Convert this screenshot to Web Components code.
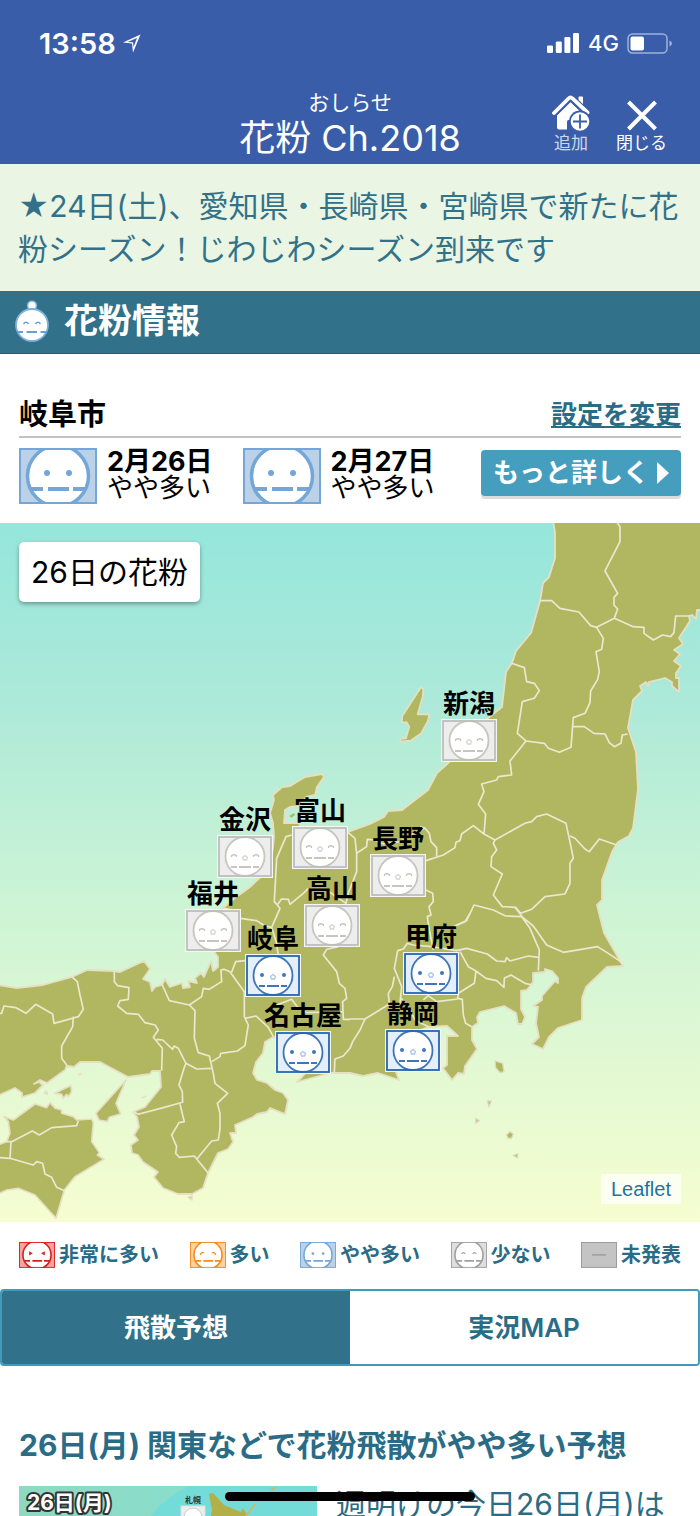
<!DOCTYPE html>
<html lang="ja">
<head>
<meta charset="utf-8">
<meta name="viewport" content="width=device-width, initial-scale=1">
<title>花粉 Ch.2018</title>
<style>
    html, body{
        margin : 0;
        padding : 0;
    }

    body{
        font-family: Inter, "Noto Sans CJK JP", sans-serif;
        color: #000;
        background-color: #fff;
        --azul: #3a5daa;
        --verde: #32718a;
        --borda: #3f9abb;
    }
</style>
</head>
<body>

<app-screen>
    <status-bar hora="13:58" rede="4G"></status-bar>
    <app-header sub="おしらせ" titulo="花粉 Ch.2018"></app-header>
    <news-ticker>★24日(土)、愛知県・長崎県・宮崎県で新たに花<br>粉シーズン！じわじわシーズン到来です</news-ticker>
    <section-title>花粉情報</section-title>
    <city-forecast cidade="岐阜市">
        <day-forecast dia="2月26日" nivel="yaya">やや多い</day-forecast>
        <day-forecast dia="2月27日" nivel="yaya">やや多い</day-forecast>
    </city-forecast>
    <pollen-map titulo="26日の花粉">
        <map-marker x="469" y="217" nivel="few">新潟</map-marker>
        <map-marker x="320" y="324" nivel="few">富山</map-marker>
        <map-marker x="245" y="333" nivel="few">金沢</map-marker>
        <map-marker x="398" y="352" nivel="few">長野</map-marker>
        <map-marker x="332" y="402" nivel="few">高山</map-marker>
        <map-marker x="213" y="407" nivel="few">福井</map-marker>
        <map-marker x="273" y="452" nivel="yaya">岐阜</map-marker>
        <map-marker x="431" y="450" nivel="yaya">甲府</map-marker>
        <map-marker x="303" y="529" nivel="yaya">名古屋</map-marker>
        <map-marker x="413" y="527" nivel="yaya">静岡</map-marker>
    </pollen-map>
    <pollen-legend></pollen-legend>
    <map-tabs></map-tabs>
    <news-article titulo="26日(月) 関東などで花粉飛散がやや多い予想">週明けの今日26日(月)は</news-article>
</app-screen>

<script>
'use strict'

// Cria a sombra e coloca nela os estilos e o conteúdo
function montar(el, css, html){
    const shadow = el.attachShadow({mode:'open'})
    const template = document.createElement('template')
    template.innerHTML = `<style>:host, *{box-sizing: border-box;} *{margin: 0; padding: 0;} ${css}</style>${html}`
    shadow.appendChild(template.content.cloneNode(true))
}

// Tela do aplicativo, com a barra preta do gesto de início por cima
class AppScreen extends HTMLElement{
    connectedCallback(){
        montar(this, `
        :host{
            display: block;
            position: relative;
            height: 100vh;
            overflow: hidden;
            background-color: #fff;
        }

        .home{
            position: absolute;
            left: 50%;
            bottom: 15px;
            width: 250px;
            height: 9px;
            margin-left: -125px;
            border-radius: 5px;
            background-color: #000;
        }
        `, `<slot></slot><div class="home"></div>`)
    }
}
customElements.define('app-screen', AppScreen)

class StatusBar extends HTMLElement{
    connectedCallback(){
        montar(this, `
        :host{
            display: flex;
            align-items: center;
            justify-content: space-between;
            height: 86px;
            padding: 0 27px 0 39px;
            color: #fff;
            background-color: var(--azul);
        }

        div{
            display: flex;
            align-items: center;
            gap: 8px;
        }

        .hora{
            gap: 6px;
            font-size: 29px;
            font-weight: 600;
        }

        .rede{
            font-size: 22px;
            font-weight: 500;
        }

        svg{
            display: block;
        }
        `, `
        <div class="hora">
            <span>${this.getAttribute('hora')}</span>
            <svg width="20" height="20" viewBox="0 0 20 20"><path d="M18.500 1.500L1 9.500L10 10.500L11 19.500ZM15 5L5.500 9L11 9.300L11.600 14Z" fill="#fff" fill-rule="evenodd"/></svg>
        </div>
        <div class="rede">
            <svg width="33" height="20" viewBox="0 0 33 20" fill="#fff">
                <rect x="0" y="12.500" width="6" height="7.500" rx="1.300"/>
                <rect x="8.800" y="8.500" width="6" height="11.500" rx="1.300"/>
                <rect x="17.400" y="4" width="6" height="16" rx="1.300"/>
                <rect x="26" y="0" width="6" height="20" rx="1.300"/>
            </svg>
            <span>${this.getAttribute('rede')}</span>
            <svg width="46" height="21" viewBox="0 0 46 21">
                <rect x="1" y="1" width="39" height="19" rx="4.500" fill="none" stroke="#9fb1d8" stroke-width="1.500"/>
                <rect x="3.500" y="3.500" width="13.500" height="14" rx="2" fill="#fff"/>
                <path d="M42.500 7.500Q45 8.500 45 10.500T42.500 13.500Z" fill="#9fb1d8"/>
            </svg>
        </div>`)
    }
}
customElements.define('status-bar', StatusBar)

class AppHeader extends HTMLElement{
    connectedCallback(){
        montar(this, `
        :host{
            display: grid;
            grid-template-columns: 1fr auto 1fr;
            padding: 2px 33px 6px;
            color: #fff;
            background-color: var(--azul);
        }

        .titulo{
            grid-column: 2;
            text-align: center;
        }

        p{
            font-size: 21px;
            line-height: 30px;
        }

        h1{
            font-size: 36px;
            font-weight: 400;
            line-height: 40px;
        }

        .acoes{
            display: flex;
            justify-content: flex-end;
            align-items: flex-end;
            gap: 26px;
            padding-bottom: 3px;
        }

        button{
            display: flex;
            flex-direction: column;
            align-items: center;
            border: 0;
            background: none;
            color: #fff;
            font-family: inherit;
            font-size: 17px;
            line-height: 24px;
        }

        .add span{
            opacity: .75;
        }
        `, `
        <div class="titulo">
            <p>${this.getAttribute('sub')}</p>
            <h1>${this.getAttribute('titulo')}</h1>
        </div>
        <div class="acoes">
            <button class="add" type="button">
                <svg width="38" height="36" viewBox="0 0 38 36">
                    <path d="M5 20L18.500 7L32 20V34.500H7Q5 34.500 5 32.500Z" fill="#fff"/>
                    <path d="M15 35V26.500Q15 25 16.500 25H22V35Z" fill="#3a5daa"/>
                    <path d="M27.500 2.500H30V11L27.500 9Z" fill="#fff" stroke="#fff" stroke-width="2" stroke-linejoin="round"/>
                    <path d="M2 18.500L16.500 4Q18.500 2 20.500 4L35.500 18" fill="none" stroke="#3a5daa" stroke-width="7"/>
                    <path d="M2 18L16.500 3.500Q18.500 1.500 20.500 3.500L35.500 17.500" fill="none" stroke="#fff" stroke-width="3.800" stroke-linecap="round"/>
                    <circle cx="28" cy="26.500" r="11" fill="#3a5daa"/>
                    <circle cx="28" cy="26.500" r="9.300" fill="#fff"/>
                    <path d="M28 19.500V33.500M21 26.500H35" stroke="#3a5daa" stroke-width="1.800"/>
                </svg>
                <span>追加</span>
            </button>
            <button type="button">
                <svg width="36" height="36" viewBox="0 0 36 36"><path d="M4.500 7L31.500 34M31.500 7L4.500 34" stroke="#fff" stroke-width="4"/></svg>
                <span>閉じる</span>
            </button>
        </div>`)
    }
}
customElements.define('app-header', AppHeader)

class NewsTicker extends HTMLElement{
    connectedCallback(){
        montar(this, `
        :host{
            display: block;
            padding: 21px 0 20px 18px;
            font-size: 30px;
            line-height: 43px;
            color: var(--verde);
            background-color: #eaf5e4;
        }
        `, `<p><slot></slot></p>`)
    }
}
customElements.define('news-ticker', NewsTicker)

class SectionTitle extends HTMLElement{
    connectedCallback(){
        montar(this, `
        :host{
            display: flex;
            align-items: center;
            gap: 14px;
            height: 63px;
            padding: 0 14px 2px;
            color: #fff;
            background-color: var(--verde);
            border-bottom: 1px solid #1f5f7a;
        }

        h2{
            font-size: 34px;
            line-height: 56px;
        }
        `, `
        <svg width="36" height="44" viewBox="0 0 36 44">
            <circle cx="18" cy="6.500" r="4.500" fill="#fff" stroke="#7fb0dc" stroke-width="1.500"/>
            <circle cx="18" cy="26" r="16" fill="#fff" stroke="#7fb0dc" stroke-width="1.800"/>
            <path d="M9.500 25Q12 21.500 14.500 25M21.500 25Q24 21.500 26.500 25" fill="none" stroke="#6a9fd2" stroke-width="1.500"/>
            <path d="M3 33H9M12.500 33H23M26.500 33H33" stroke="#6a9fd2" stroke-width="2"/>
        </svg>
        <h2><slot></slot></h2>`)
    }
}
customElements.define('section-title', SectionTitle)

// Rosto que mostra o nível de pólen
const olhos = {
    max:  '<path d="M22 20L30 24.500L22 29ZM56 20L48 24.500L56 29Z" fill="COR"/>',
    high: '<path d="M22 28Q26 20 31 24M56 28Q52 20 47 24" fill="none" stroke="COR" stroke-width="2.500"/>',
    yaya: '<circle cx="28" cy="25" r="3" fill="COR"/><circle cx="50" cy="25" r="3" fill="COR"/>',
    few:  '<path d="M23 26Q27 20 31 26M47 26Q51 20 55 26" fill="none" stroke="COR" stroke-width="2.500"/>'
}
const cores = {
    max:  ['#f4a5a2', '#d9201c'],
    high: ['#fdd2a2', '#f08c22'],
    yaya: ['#bbd1e8', '#74a7d8'],
    few:  ['#dedede', '#a0a0a0'],
    none: ['#c4c4c4', '#9a9a9a']
}

class PollenFace extends HTMLElement{
    connectedCallback(){
        const nivel = this.getAttribute('nivel')
        const [fundo, cor] = cores[nivel]
        const rosto = nivel == 'none'
            ? `<path d="M24 28H54" stroke="${cor}" stroke-width="3"/>`
            : `<circle cx="39" cy="28" r="30.500" fill="#fff" stroke="${cor}" stroke-width="3.500"/>
               ${olhos[nivel].replaceAll('COR', cor)}
               <path d="M12 41H24M29 41H50M54 41H66" stroke="${cor}" stroke-width="3.800"/>`
        montar(this, `
        :host{
            display: block;
            width: 78px;
            flex: none;
        }

        svg{
            display: block;
            width: 100%;
        }
        `, `
        <svg viewBox="0 0 78 56">
            <rect width="78" height="56" fill="${fundo}"/>
            ${rosto}
            <rect x="1" y="1" width="76" height="54" fill="none" stroke="${cor}" stroke-width="2"/>
        </svg>`)
    }
}
customElements.define('pollen-face', PollenFace)

class CityForecast extends HTMLElement{
    connectedCallback(){
        montar(this, `
        :host{
            display: block;
            padding: 40px 19px 19px;
        }

        header{
            display: flex;
            justify-content: space-between;
            align-items: center;
            height: 44px;
            border-bottom: 2px solid #c2c2c2;
        }

        h3{
            font-size: 29px;
            line-height: 40px;
        }

        header a{
            font-size: 26px;
            font-weight: 700;
            line-height: 40px;
            color: #2a6c86;
            text-underline-offset: 2px;
            text-decoration-thickness: 2px;
        }

        .dias{
            display: flex;
            align-items: flex-start;
            gap: 30px;
            padding-top: 10px;
        }

        button{
            display: flex;
            align-items: center;
            justify-content: center;
            gap: 8px;
            width: 200px;
            height: 46px;
            margin: 2px 0 0 auto;
            border: 0;
            border-radius: 4px;
            color: #fff;
            background-color: #469ebf;
            box-shadow: 0 3px 0 #dcdcdc;
            font-family: inherit;
            font-size: 26px;
            font-weight: 700;
            line-height: 40px;
            white-space: nowrap;
        }
        `, `
        <header><h3>${this.getAttribute('cidade')}</h3><a href="#settings">設定を変更</a></header>
        <div class="dias">
            <slot></slot>
            <button type="button">もっと詳しく<svg width="12" height="22" viewBox="0 0 12 22"><path d="M0 0L12 11L0 22Z" fill="#fff"/></svg></button>
        </div>`)
    }
}
customElements.define('city-forecast', CityForecast)

class DayForecast extends HTMLElement{
    connectedCallback(){
        montar(this, `
        :host{
            display: flex;
            gap: 10px;
            height: 56px;
            white-space: nowrap;
        }

        strong{
            display: block;
            font-size: 27px;
            line-height: 27px;
        }

        p{
            font-size: 26px;
            line-height: 26px;
        }
        `, `
        <pollen-face nivel="${this.getAttribute('nivel')}"></pollen-face>
        <div><strong>${this.getAttribute('dia')}</strong><p><slot></slot></p></div>`)
    }
}
customElements.define('day-forecast', DayForecast)

// Marcador de cidade, x e y são o centro do rosto no mapa de 700x699
class MapMarker extends HTMLElement{
    connectedCallback(){
        const azul = this.getAttribute('nivel') == 'yaya'
        const borda = azul ? '#2565b4' : '#bdbdbd'
        const traco = azul ? '#3d77ba' : '#c8c5bd'
        const olho = azul
            ? `<circle cx="17" cy="21" r="2" fill="${traco}"/><circle cx="39" cy="21" r="2" fill="${traco}"/>`
            : `<path d="M14.500 22V20.500Q17 19 19.500 20.500V22M36.500 22V20.500Q39 19 41.500 20.500V22" fill="none" stroke="${traco}" stroke-width="1.300"/>`
        this.style.left = `${this.getAttribute('x') / 7}%`
        this.style.top = `${this.getAttribute('y') / 6.99}%`
        montar(this, `
        :host{
            position: absolute;
            display: flex;
            flex-direction: column;
            align-items: center;
            transform: translate(-50%, -51px);
            font-size: 26px;
            font-weight: 700;
            line-height: 30px;
            white-space: nowrap;
        }

        svg{
            display: block;
        }
        `, `
        <span><slot></slot></span>
        <svg width="56" height="43" viewBox="0 0 56 43">
            <rect width="56" height="43" fill="#f6f6f2"/>
            <rect x="2" y="2" width="52" height="39" fill="${azul ? '#e4effb' : '#ededed'}"/>
            <circle cx="28" cy="21.500" r="19.500" fill="#fff" stroke="${traco}" stroke-width="1.800"/>
            ${olho}
            <path d="M28 20.500L30.500 22.500L29.500 25H26.500L25.500 22.500Z" fill="none" stroke="${azul ? '#a9c6e6' : '#d8d5ce'}" stroke-width="1.300"/>
            <path d="M14 32H20M22 32H34M36 32H42" stroke="${traco}" stroke-width="1.800"/>
            <rect x="2" y="2" width="52" height="39" fill="none" stroke="${borda}" stroke-width="1.800"/>
        </svg>`)
    }
}
customElements.define('map-marker', MapMarker)

class PollenMap extends HTMLElement{
    connectedCallback(){
        montar(this, `
        :host{
            display: block;
            position: relative;
            overflow: hidden;
        }

        svg{
            display: block;
            width: 100%;
        }

        h3{
            position: absolute;
            left: 19px;
            top: 19px;
            padding: 0 12px;
            border-radius: 5px;
            background-color: #fff;
            box-shadow: 0 2px 4px rgba(0, 0, 0, .35);
            font-size: 30px;
            font-weight: 400;
            line-height: 60px;
        }

        a{
            position: absolute;
            right: 19px;
            bottom: 18px;
            padding: 0 10px;
            background-color: rgba(255, 255, 255, .7);
            color: #1f72a3;
            font-family: "Liberation Sans", sans-serif;
            font-size: 20px;
            line-height: 30px;
            text-decoration: none;
        }
        `, `
        <svg viewBox="0 0 700 699">
            <defs>
                <linearGradient id="mar" x1="0" y1="0" x2="0" y2="1">
                    <stop offset="0" stop-color="#95e6dc"/>
                    <stop offset=".25" stop-color="#ace9d9"/>
                    <stop offset=".55" stop-color="#cdf4d5"/>
                    <stop offset="1" stop-color="#f6fdd0"/>
                </linearGradient>
            </defs>
            <rect width="700" height="699" fill="url(#mar)"/>

            <!-- Honshu -->
            <g transform="translate(0 -523)" fill="#b1b761" stroke="#e6dfc4" stroke-width="1.800" stroke-linejoin="round">
                <path d="M553 520L555 533V558L549 577L543 583L540 601L531 633L516 651L512 663L506 672L502 707L488 718L470 742L446 765L437 773L428 790L402 810L388 811L384 817L370 824L348 832L340 845L320 852L305 845L300 827L299 823H284L285 810L290 807L300 806L306 797L315 795L317 787L324 777L322 774L305 777L290 786L282 787L273 795L274 800L270 813L273 823L274 837L273 847L270 868L250 887L235 898L223 908L214 925L212 945L215 953L218 957V967L213 971L211 961L208 968L204 977L201 973L195 978L197 983L188 981L190 987L183 988L182 983L170 987L165 979L162 985L155 987L152 991L150 982L143 979L150 969L144 961L120 972L114 971L87 970L72 977L43 985L17 988L-3 985V1096L15 1088L22 1093V1097L35 1093L43 1085L39 1082L34 1084L40 1080L47 1083L65 1070L68 1066L74 1067L80 1062L100 1062L128 1077L150 1074L152 1071L160 1071L161 1087L145 1107L133 1112L137 1117L139 1127L134 1135L138 1140L131 1145L132 1153L138 1155L143 1162L158 1172L154 1177L163 1188L178 1194H192L203 1188L208 1173L218 1153L228 1149L233 1142L230 1133H236L235 1125L253 1117L257 1114L267 1112L270 1108L285 1114L288 1100L283 1093L275 1090L267 1083L257 1080L253 1073L256 1062L263 1053L265 1042L273 1037L290 1040L310 1068L302 1077L297 1082L330 1073L350 1073L363 1076L378 1073L399 1080L396 1072L400 1050L418 1031L428 1027L447 1026L458 1036H447V1065L443 1068L452 1080L458 1073L464 1074L465 1066L477 1049L472 1040V1027L478 1023L477 1017L480 1012L504 1006L516 1013L518 1024H522L525 1017L521 1009V991L527 990L533 982V973L545 972V969L552 971L558 978V983L555 981L542 996V1000L533 1006L538 1007L536 1023L539 1037L532 1044L543 1049L549 1037L558 1028L582 1020V998L586 987L607 967L623 966L604 933L597 905L602 900V880L612 852L618 842L629 836L633 828L638 789L636 752L628 728L633 700L642 691L640 686L646 682L648 686L649 682L665 678L672 682V686L679 692V678H676V673L681 666L674 661L680 654L674 650L683 644L679 638L690 621L689 616L692 615L696 619L697 610L703 610V520Z"/>
            </g>

            <!-- Sado e as fronteiras de Tohoku e do norte de Kanto -->
            <g transform="translate(350 -3) scale(.3333)" fill="none" stroke="#ece8cf" stroke-width="5" stroke-linejoin="round">
                <path d="M213 502L220 507L218 530L203 583H238L233 605L213 640L182 662L150 665L152 657L168 655L178 620L170 607H155L157 588Z" fill="#b1b761" stroke="#e6dfc4"/>
                <path d="M802 8L810 20V65L765 153L803 220L792 232V255L803 267L793 295L740 322M793 295L850 320L882 322V340L910 360L938 345L962 350L972 338L977 288H1018"/>
                <path d="M570 242H605L630 265L687 276L722 317L740 322L760 355L755 388L738 395L748 455L743 478L722 513L720 548L705 580L670 593L663 682L628 697L595 685L583 670L528 663L502 640L517 545L553 535L568 512L553 490L530 485L523 443L485 430"/>
                <path d="M668 620H703L732 640L765 642L778 668L793 680L813 670L817 645L833 642"/>
                <path d="M528 663L480 723L485 765L445 770L440 780L395 792L402 815L385 853L407 882L402 942L435 960M402 942L370 917L335 942L330 962L318 967L315 983L280 1005L228 1022M260 1008V983L243 965L238 940L225 925L210 920"/>
                <path d="M435 960L525 910L545 905L560 890L590 882L648 910L663 980L670 1015L660 1030V1090L645 1122L585 1130L545 1168L512 1180L497 1162L457 1160L430 1125L457 1062L423 1040L425 1010L440 990L430 970Z"/>
                <path d="M660 948L675 955L705 987L718 995L748 957L800 975M228 1110L248 1120L250 1145L237 1160L243 1185L232 1190L238 1230L250 1290"/>
            </g>

            <!-- Kanto, Tokai e as ilhas de Izu -->
            <g transform="translate(350 377) scale(.3333)" fill="none" stroke="#ece8cf" stroke-width="5" stroke-linejoin="round">
                <path d="M310 80L350 62L372 15L430 30L467 48L515 50L540 85L568 150L565 212M495 22L518 52L550 78L590 135L640 157L743 140L790 170L820 190"/>
                <path d="M318 152L350 145L412 162L440 183L465 185L470 173L480 183L535 168L565 172M330 155L355 200L378 213L408 235L440 242L462 262L463 235L483 225L525 250L548 255M378 213L373 250L325 280L323 295L337 298L340 345L347 370L365 380"/>
                <path d="M220 300L235 287L260 305L323 297M320 152L245 140L190 135L172 130L160 147L143 152L133 205L155 260L150 310M133 230L127 260L115 280L118 312L45 357H0M45 357L30 390L8 425L0 445M150 290L180 330L195 360L235 380"/>
                <path d="M435 483L458 490L462 515L450 518L437 503ZM412 603H424L417 620ZM377 655L388 662L378 670ZM470 705L480 695L490 703L484 715L474 714ZM490 767L503 761V774Z" fill="#b1b761" stroke="#e0dac0" stroke-width="4"/>
            </g>

            <!-- Hokuriku e Gifu -->
            <g transform="translate(170 157) scale(.3333)" fill="none" stroke="#ece8cf" stroke-width="5" stroke-linejoin="round">
                <path d="M535 458L555 475L560 520V575L535 640L528 670L470 630M560 520L590 500L592 478L615 480L640 492L690 485L740 455L765 445"/>
                <path d="M365 465L348 470L320 535L313 665L330 685L305 742L320 790L325 830M322 674L335 657L355 658L360 673L400 640L415 625M212 715L260 722L285 738L305 742M160 685L190 690L200 710"/>
                <path d="M505 800L470 808L460 825L500 875L508 910L525 925L530 955L518 965L520 1018H540M320 975L365 958L385 985L410 998L518 995M900 700L885 725L860 735"/>
                <path d="M358 408L370 400L376 404L365 413Z" fill="#b1b761" stroke="none"/>
            </g>

            <!-- Kansai, Shikoku e Awaji -->
            <g transform="translate(0 417) scale(.3333)" fill="none" stroke="#ece8cf" stroke-width="5" stroke-linejoin="round">
                <path d="M-6 615L20 605L30 580L25 545L12 530L40 540L105 492L140 503L150 488L165 505L185 510V520L220 530L230 540L275 537L280 548L275 605L298 638L292 645L312 658L225 710L193 750L168 835L105 765L55 745L20 750L-6 762Z" fill="#b1b761" stroke="#e6dfc4"/>
                <path d="M378 420L348 490L362 522L328 532L322 545L297 540L288 520Z" fill="#b1b761" stroke="#e6dfc4"/>
                <path d="M165 460L195 445L213 437L215 455L205 470L200 463L190 475L185 463ZM133 458L140 453L142 463ZM235 405L245 400M425 474L440 468M565 772L576 768V780Z" fill="#b1b761" stroke="#e6dfc4"/>
                <path d="M20 605H35L97 573L118 585L155 563L230 557L235 543M33 605L30 655M0 653L30 655L100 675L110 665L128 670L135 702L155 712L170 742L193 752"/>
                <path d="M215 110L232 125L240 165L250 208L235 230L162 250L158 222L107 193L78 220L48 203L12 198L5 220H0M220 230L218 260L185 318V355L200 375L198 388"/>
                <path d="M343 93V125L353 137L387 143L385 178L360 182L353 198L380 220L415 223L435 248L465 255L475 270L460 292L487 325L485 392M470 298L488 300L518 328L522 318L535 325L558 370L590 387L635 385"/>
                <path d="M558 370L553 382L537 435L547 455L548 487L490 503L415 523L400 515M540 493L553 545L537 548L515 585L530 620L527 640L538 652L583 648L625 700M590 658L635 603L655 600L660 567V520L652 490L683 460L645 430L640 400L628 348L595 338L583 295L585 212L568 195L508 182L487 135"/>
                <path d="M568 195L605 170L610 145L628 148L665 125L663 90L672 88L690 95L733 155V230L745 255L735 317L712 333L662 340L660 350L635 365M695 97L707 65L735 62M735 235L768 228L805 262L820 290M1003 400L1005 357L1030 348L1050 325"/>
            </g>
        </svg>
        <slot></slot>
        <h3>${this.getAttribute('titulo')}</h3>
        <a href="#leaflet">Leaflet</a>`)
    }
}
customElements.define('pollen-map', PollenMap)

class PollenLegend extends HTMLElement{
    connectedCallback(){
        const itens = [['max', '非常に多い'], ['high', '多い'], ['yaya', 'やや多い'], ['few', '少ない'], ['none', '未発表']]
        montar(this, `
        :host{
            display: block;
            padding: 20px 19px 21px;
        }

        ul{
            display: flex;
            justify-content: space-between;
            list-style: none;
        }

        li{
            display: flex;
            align-items: center;
            gap: 4px;
            color: #2a6c86;
            font-size: 20px;
            font-weight: 700;
            line-height: 26px;
            white-space: nowrap;
        }

        pollen-face{
            width: 36px;
        }
        `, `<ul>${itens.map(([nivel, nome]) => `<li><pollen-face nivel="${nivel}"></pollen-face>${nome}</li>`).join('')}</ul>`)
    }
}
customElements.define('pollen-legend', PollenLegend)

class MapTabs extends HTMLElement{
    connectedCallback(){
        montar(this, `
        :host{
            display: grid;
            grid-template-columns: 1fr 1fr;
            height: 77px;
            border: 2px solid var(--borda);
            border-radius: 4px;
            overflow: hidden;
        }

        button{
            border: 0;
            background-color: #fff;
            color: #2a6c86;
            font-family: inherit;
            font-size: 26px;
            font-weight: 700;
            line-height: 40px;
        }

        .ativo{
            background-color: var(--verde);
            color: #fff;
        }

        .map{
            font-weight: 600;
        }
        `, `<button class="ativo" type="button">飛散予想</button><button class="map" type="button">実況MAP</button>`)
    }
}
customElements.define('map-tabs', MapTabs)

class NewsArticle extends HTMLElement{
    connectedCallback(){
        montar(this, `
        :host{
            display: block;
            padding: 57px 19px 0;
            color: #2a6c86;
        }

        h2{
            font-size: 30px;
            line-height: 44px;
            white-space: nowrap;
        }

        .corpo{
            display: flex;
            gap: 19px;
            padding-top: 19px;
        }

        svg{
            flex: none;
            width: 298px;
        }

        p{
            font-size: 30px;
            line-height: 36px;
            white-space: nowrap;
        }
        `, `
        <h2>${this.getAttribute('titulo')}</h2>
        <div class="corpo">
            <svg width="298" height="168" viewBox="0 0 298 168">
                <defs>
                    <linearGradient id="fundo">
                        <stop offset="0" stop-color="#8ed9c0"/>
                        <stop offset=".5" stop-color="#8addcb"/>
                        <stop offset="1" stop-color="#72dcd8"/>
                    </linearGradient>
                </defs>
                <rect width="298" height="168" fill="url(#fundo)"/>
                <path d="M125 40Q140 14 170 0H298V40Z" fill="#74dcd8"/>
                <path d="M190 8L194 7L205 19L222 26L224 22L230 32L215 36L190 40L193 24Z" fill="#b3b04a"/>
                <path d="M224 34L236 18M240 12L246 8M252 4L257 1" stroke="#c9b96a" stroke-width="2"/>
                <rect x="162" y="20" width="24" height="20" fill="#eee" stroke="#ddd"/>
                <circle cx="174" cy="31" r="9" fill="#fff" stroke="#ccc"/>
                <text x="166" y="17" font-size="8" font-weight="700" fill="#333">札幌</text>
                <text x="8" y="24" font-size="21" font-weight="700" fill="#fff" stroke="#333" stroke-width="4" stroke-linejoin="round" paint-order="stroke">26日(月)</text>
            </svg>
            <p><slot></slot></p>
        </div>`)
    }
}
customElements.define('news-article', NewsArticle)
</script>
</body>
</html>
